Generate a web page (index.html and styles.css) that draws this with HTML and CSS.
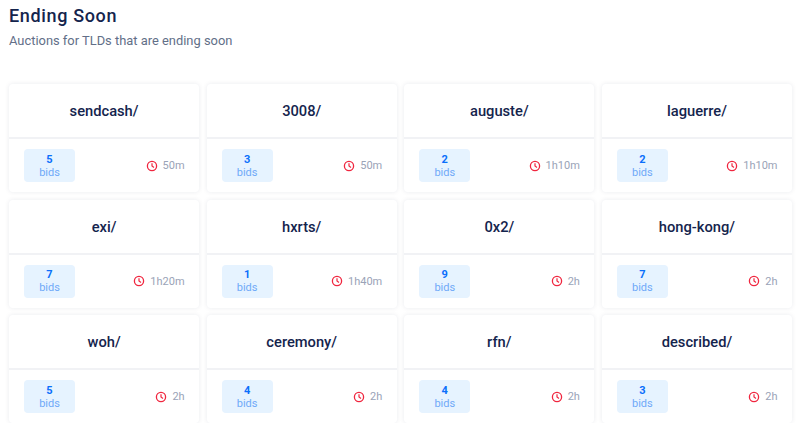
FILE: index.html
```html
<!DOCTYPE html>
<html lang="en">
<head>
  <meta charset="UTF-8">
  <meta name="viewport" content="width=device-width, initial-scale=1.0">
  <title>Ending Soon</title>
  <link rel="stylesheet" href="styles.css">
</head>
<body>
  <svg class="defs" width="0" height="0">
    <symbol id="clock" viewBox="0 0 12 12">
      <circle cx="6" cy="6" r="4.6" fill="none" stroke="currentColor" stroke-width="1.3"/>
      <path d="M6 3.2V6l2 1.4" fill="none" stroke="currentColor" stroke-width="1.2"/>
    </symbol>
  </svg>

  <div class="container">
    <h1>Ending Soon</h1>
    <p class="subtitle">Auctions for TLDs that are ending soon</p>

    <div class="grid">
      <div class="card">
        <div class="name">sendcash/</div>
        <div class="info">
          <div class="bids"><strong>5</strong><span>bids</span></div>
          <div class="time"><svg class="icon"><use href="#clock"/></svg>50m</div>
        </div>
      </div>
      <div class="card">
        <div class="name">3008/</div>
        <div class="info">
          <div class="bids"><strong>3</strong><span>bids</span></div>
          <div class="time"><svg class="icon"><use href="#clock"/></svg>50m</div>
        </div>
      </div>
      <div class="card">
        <div class="name">auguste/</div>
        <div class="info">
          <div class="bids"><strong>2</strong><span>bids</span></div>
          <div class="time"><svg class="icon"><use href="#clock"/></svg>1h10m</div>
        </div>
      </div>
      <div class="card">
        <div class="name">laguerre/</div>
        <div class="info">
          <div class="bids"><strong>2</strong><span>bids</span></div>
          <div class="time"><svg class="icon"><use href="#clock"/></svg>1h10m</div>
        </div>
      </div>
      <div class="card">
        <div class="name">exi/</div>
        <div class="info">
          <div class="bids"><strong>7</strong><span>bids</span></div>
          <div class="time"><svg class="icon"><use href="#clock"/></svg>1h20m</div>
        </div>
      </div>
      <div class="card">
        <div class="name">hxrts/</div>
        <div class="info">
          <div class="bids"><strong>1</strong><span>bids</span></div>
          <div class="time"><svg class="icon"><use href="#clock"/></svg>1h40m</div>
        </div>
      </div>
      <div class="card">
        <div class="name">0x2/</div>
        <div class="info">
          <div class="bids"><strong>9</strong><span>bids</span></div>
          <div class="time"><svg class="icon"><use href="#clock"/></svg>2h</div>
        </div>
      </div>
      <div class="card">
        <div class="name">hong-kong/</div>
        <div class="info">
          <div class="bids"><strong>7</strong><span>bids</span></div>
          <div class="time"><svg class="icon"><use href="#clock"/></svg>2h</div>
        </div>
      </div>
      <div class="card">
        <div class="name">woh/</div>
        <div class="info">
          <div class="bids"><strong>5</strong><span>bids</span></div>
          <div class="time"><svg class="icon"><use href="#clock"/></svg>2h</div>
        </div>
      </div>
      <div class="card">
        <div class="name">ceremony/</div>
        <div class="info">
          <div class="bids"><strong>4</strong><span>bids</span></div>
          <div class="time"><svg class="icon"><use href="#clock"/></svg>2h</div>
        </div>
      </div>
      <div class="card">
        <div class="name">rfn/</div>
        <div class="info">
          <div class="bids"><strong>4</strong><span>bids</span></div>
          <div class="time"><svg class="icon"><use href="#clock"/></svg>2h</div>
        </div>
      </div>
      <div class="card">
        <div class="name">described/</div>
        <div class="info">
          <div class="bids"><strong>3</strong><span>bids</span></div>
          <div class="time"><svg class="icon"><use href="#clock"/></svg>2h</div>
        </div>
      </div>
    </div>
  </div>
</body>
</html>
```

FILE: styles.css
```css
* {
  margin: 0;
  padding: 0;
  box-sizing: border-box;
}

body {
  font-family: 'Roboto', sans-serif;
  background-color: #fff;
  color: #14244d;
  overflow: hidden;
}

.defs {
  display: block;
}

.container {
  padding: 5px 8px 0 9px;
}

h1 {
  font-size: 18px;
  line-height: 22px;
  font-weight: 500;
  letter-spacing: 0.65px;
}

.subtitle {
  margin-top: 5px;
  font-size: 12.9px;
  line-height: 18px;
  color: #626f88;
}

.grid {
  display: grid;
  grid-template-columns: repeat(4, 1fr);
  gap: 7.5px;
  margin-top: 34px;
}

.card {
  background-color: #fff;
  border-radius: 4px;
  box-shadow: 0 0 5px rgba(20, 33, 61, 0.09);
}

.name {
  height: 55px;
  padding-top: 1px;
  display: flex;
  align-items: center;
  justify-content: center;
  font-size: 14.7px;
  font-weight: 500;
  border-bottom: 2px solid #f1f2f5;
}

.info {
  height: 53px;
  display: flex;
  align-items: center;
  justify-content: space-between;
  padding: 0 14.5px 0 15px;
}

.bids {
  width: 51px;
  height: 33px;
  display: flex;
  flex-direction: column;
  align-items: center;
  justify-content: center;
  background-color: #e6f3ff;
  border-radius: 4px;
  font-size: 11px;
  line-height: 13px;
}

.bids strong {
  font-weight: 700;
  color: #0b6ffb;
}

.bids span {
  color: #6fa9f8;
}

.time {
  display: flex;
  align-items: center;
  font-size: 11px;
  color: #9aa3b7;
}

.icon {
  width: 12px;
  height: 12px;
  margin-right: 5px;
  color: #f0263f;
}
```
